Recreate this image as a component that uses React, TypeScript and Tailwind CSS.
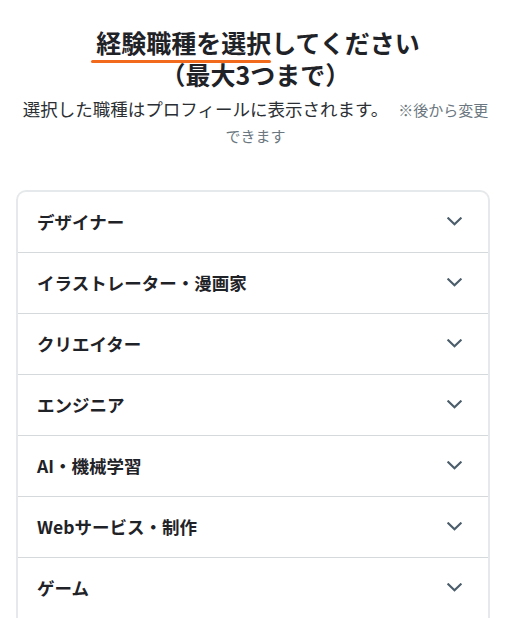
import React from 'react';

const categories = [
  'デザイナー',
  'イラストレーター・漫画家',
  'クリエイター',
  'エンジニア',
  'AI・機械学習',
  'Webサービス・制作',
  'ゲーム',
];

function Chevron() {
  return (
    <svg width="15" height="9" viewBox="0 0 15 9" fill="none" className="mb-[2px] shrink-0">
      <path d="M1.3 1.3 7.5 7.3l6.2-6" stroke="#4b5d6b" strokeWidth="2.1" strokeLinecap="square" />
    </svg>
  );
}

export default function App() {
  return (
    <div
      className="min-h-[618px] bg-white text-[#1f2328]"
      style={{ fontFamily: '"Noto Sans CJK JP", "Noto Sans", sans-serif' }}
    >
      {/* Heading */}
      <div className="pt-[26px] px-[20px] text-center">
        <h1 className="text-[25px] font-bold leading-[32px]">
          <span className="relative pl-[5px]">
            経験職種を選択
            <span className="absolute bottom-[-3px] left-0 right-0 h-[3px] rounded-full bg-[#f26b1d]" />
          </span>
          してください
          <br />
          （最大3つまで）
        </h1>
        <p className="mt-[6px] text-[17.5px] leading-[25px] text-[#2b2f33]">
          選択した職種はプロフィールに表示されます。
          <span className="ml-[10px] text-[15px] leading-[25px] text-[#6b7780]">※後から変更できます</span>
        </p>
      </div>

      {/* Category list */}
      <div className="ml-[16px] mr-[21px] mt-[42px] rounded-t-[10px] border-2 border-b-0 border-[#e6e9eb]">
        {categories.map((c) => (
          <button
            key={c}
            className="flex h-[61px] w-full items-center justify-between border-b border-[#d5d9dc] pl-[19px] pr-[26px] text-left"
          >
            <span className="text-[17.5px] font-bold leading-none">{c}</span>
            <Chevron />
          </button>
        ))}
      </div>
    </div>
  );
}
